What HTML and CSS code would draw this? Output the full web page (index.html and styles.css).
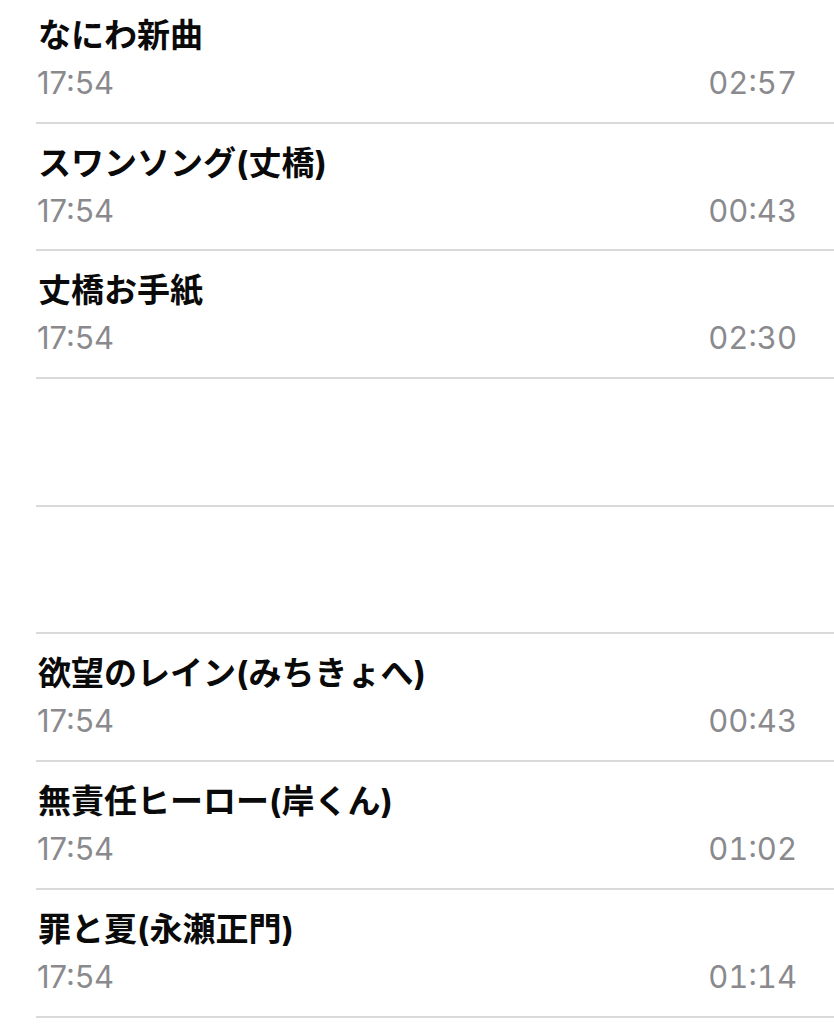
FILE: index.html
```html
<!DOCTYPE html>
<html lang="ja">
<head>
    <meta charset="UTF-8">
    <meta name="viewport" content="width=device-width, initial-scale=1.0">
    <title>ボイスメモ</title>
    <link rel="stylesheet" href="styles.css">
</head>
<body>
    <div class="list">
        <div class="memo">
            <div class="title">なにわ新曲</div>
            <div class="info"><span>17:54</span><span class="duration">02:57</span></div>
        </div>
        <div class="memo">
            <div class="title">スワンソング(丈橋)</div>
            <div class="info"><span>17:54</span><span class="duration">00:43</span></div>
        </div>
        <div class="memo">
            <div class="title">丈橋お手紙</div>
            <div class="info"><span>17:54</span><span class="duration">02:30</span></div>
        </div>
        <div class="memo empty"></div>
        <div class="memo empty"></div>
        <div class="memo">
            <div class="title">欲望のレイン(みちきょへ)</div>
            <div class="info"><span>17:54</span><span class="duration">00:43</span></div>
        </div>
        <div class="memo">
            <div class="title">無責任ヒーロー(岸くん)</div>
            <div class="info"><span>17:54</span><span class="duration">01:02</span></div>
        </div>
        <div class="memo">
            <div class="title">罪と夏(永瀬正門)</div>
            <div class="info"><span>17:54</span><span class="duration">01:14</span></div>
        </div>
    </div>
</body>
</html>
```

FILE: styles.css
```css
body {
    margin: 0;
    overflow: hidden;
    background: #fff;
    font-family: "Inter", "Noto Sans CJK JP", sans-serif;
}
.list {
    margin-top: -4px;
    padding-left: 36px;
}
.memo {
    height: 106.7px;
    padding-top: 19px;
    border-bottom: 2px solid #dadada;
}
.title {
    font-size: 33px;
    font-weight: 700;
    line-height: 40px;
    color: #0a0a0a;
    padding-left: 2px;
}
.info {
    display: flex;
    justify-content: space-between;
    font-size: 31px;
    line-height: 36px;
    color: #8a8a8e;
    margin-top: 10px;
    padding-left: 1px;
    padding-right: 37px;
}
.duration {
    font-variant-numeric: tabular-nums;
}
```
